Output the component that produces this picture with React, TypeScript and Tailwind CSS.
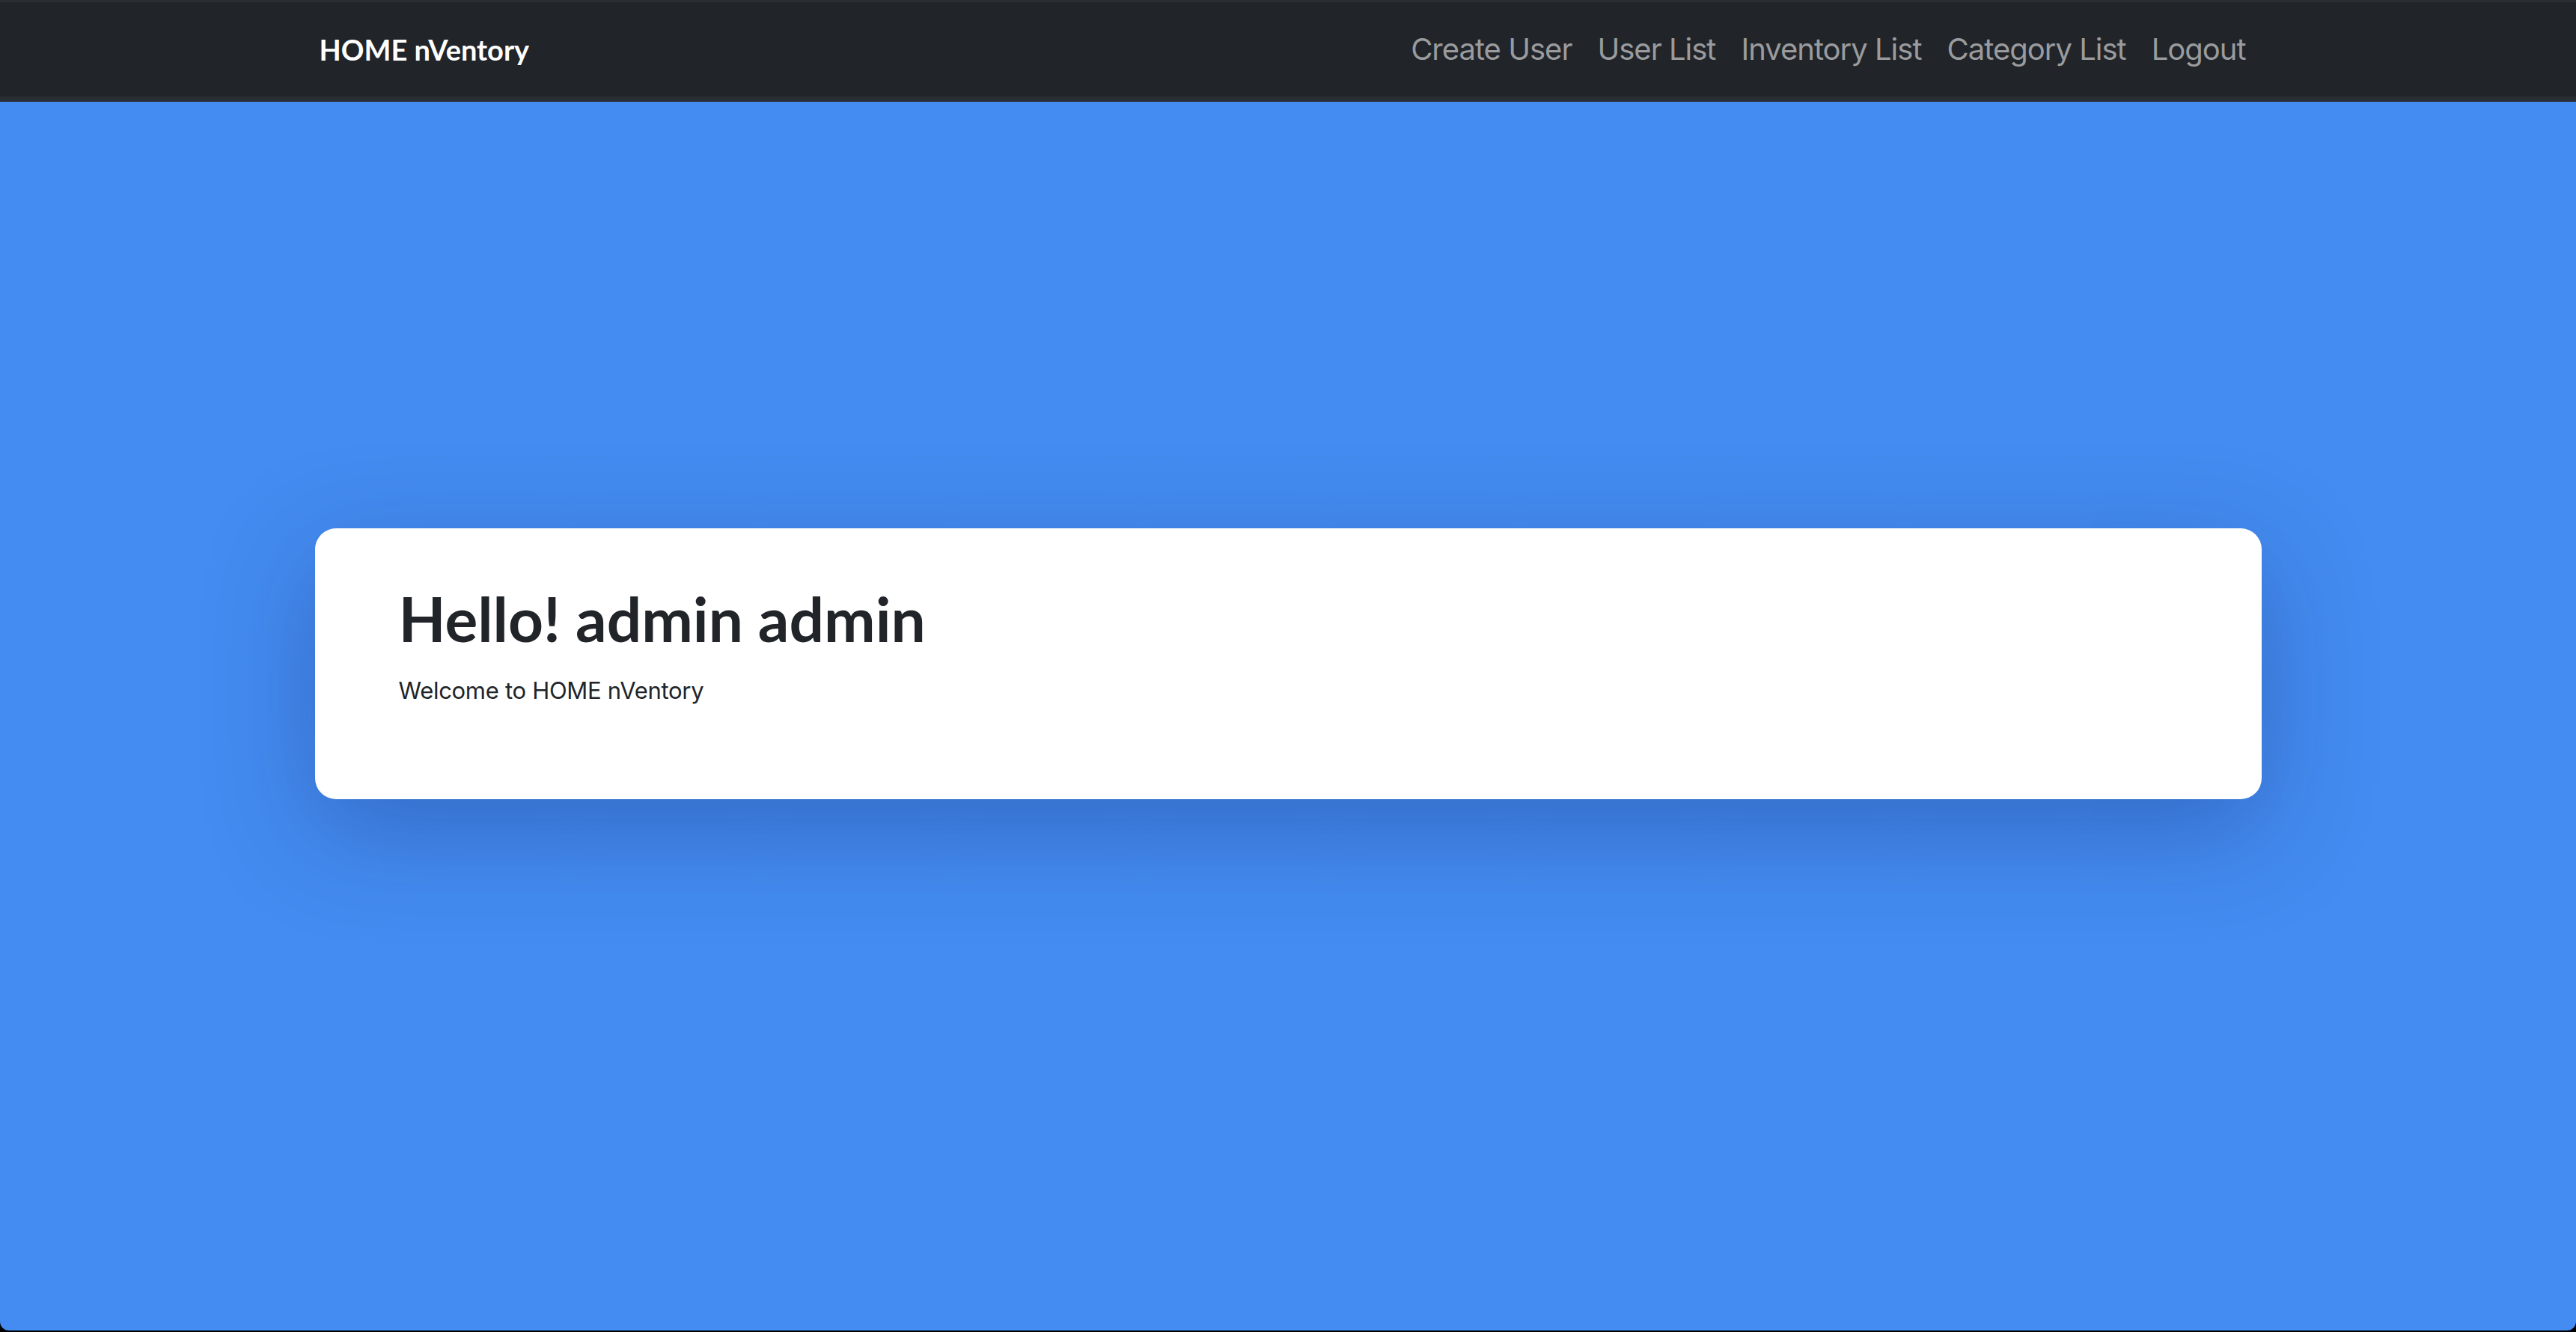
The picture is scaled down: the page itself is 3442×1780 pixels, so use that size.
export default function App() {
  const links = ["Create User", "User List", "Inventory List", "Category List", "Logout"];

  return (
    <div className="flex h-[1780px] flex-col bg-black">
      <div className="flex flex-1 flex-col overflow-hidden rounded-b-[12px] bg-[#448cf1] mb-[2px]">
        {/* Navbar */}
        <nav className="h-[136px] shrink-0 border-t-[3px] border-b-[7px] border-t-[#2b2e33] border-b-[#2a2d33] bg-[#212529]">
          <div className="mx-auto flex h-full w-[2601px] items-center justify-between pl-[6px] pr-[21px]">
            <a className="font-['Lato',sans-serif] text-[38px] font-bold text-white">HOME nVentory</a>
            <ul className="flex items-center gap-[34px]">
              {links.map((l) => (
                <li key={l} className="font-['Inter',sans-serif] text-[40px] tracking-[-1px] text-[#9a9b9e]">
                  {l}
                </li>
              ))}
            </ul>
          </div>
        </nav>

        {/* Main */}
        <main className="flex flex-1 justify-center pt-[570px]">
          <div className="h-[362px] w-[2601px] rounded-[28px] bg-white pl-[112px] pt-[71px] shadow-[0_40px_140px_rgba(20,40,110,0.35)]">
            <h1 className="font-['Lato',sans-serif] text-[82px] font-bold leading-[1.2] text-[#212529]">
              Hello! admin admin
            </h1>
            <p className="mt-[25px] font-['Inter',sans-serif] text-[31px] tracking-[-0.3px] text-[#212529]">
              Welcome to HOME nVentory
            </p>
          </div>
        </main>
      </div>
    </div>
  );
}
